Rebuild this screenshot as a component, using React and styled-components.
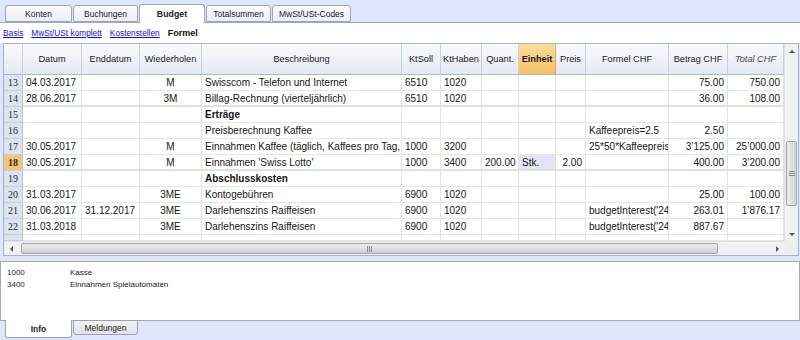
import React from "react";
import styled, { createGlobalStyle } from "styled-components";

const GlobalStyle = createGlobalStyle`
  html, body {
    margin: 0;
    padding: 0;
    background: #dde6fa;
  }
  body {
    font-family: "Liberation Sans", Arial, sans-serif;
    color: #111;
  }
`;

const COLS = [
  { key: "n", title: "", width: 19, align: "center" },
  { key: "datum", title: "Datum", width: 59, align: "left" },
  { key: "end", title: "Enddatum", width: 58, align: "left" },
  { key: "rep", title: "Wiederholen", width: 62, align: "center" },
  { key: "desc", title: "Beschreibung", width: 200, align: "left" },
  { key: "soll", title: "KtSoll", width: 39, align: "left" },
  { key: "haben", title: "KtHaben", width: 41, align: "left" },
  { key: "quant", title: "Quant.", width: 37, align: "right" },
  { key: "unit", title: "Einheit", width: 37, align: "left" },
  { key: "preis", title: "Preis", width: 30, align: "right" },
  { key: "formel", title: "Formel CHF", width: 83, align: "left" },
  { key: "betrag", title: "Betrag CHF", width: 59, align: "right" },
  { key: "total", title: "Total CHF", width: 56, align: "right" },
];

const TEMPLATE = COLS.map((c) => c.width + "px").join(" ");

const ROWS = [
  { n: 13, datum: "04.03.2017", rep: "M", desc: "Swisscom - Telefon und Internet", soll: "6510", haben: "1020", betrag: "75.00", total: "750.00" },
  { n: 14, datum: "28.06.2017", rep: "3M", desc: "Billag-Rechnung (vierteljährlich)", soll: "6510", haben: "1020", betrag: "36.00", total: "108.00", thick: true },
  { n: 15, desc: "Erträge", group: true },
  { n: 16, desc: "Preisberechnung Kaffee", formel: "Kaffeepreis=2.5", betrag: "2.50" },
  { n: 17, datum: "30.05.2017", rep: "M", desc: "Einnahmen Kaffee (täglich, Kaffees pro Tag,", soll: "1000", haben: "3200", formel: "25*50*Kaffeepreis", betrag: "3’125.00", total: "25’000.00" },
  { n: 18, datum: "30.05.2017", rep: "M", desc: "Einnahmen 'Swiss Lotto'", soll: "1000", haben: "3400", quant: "200.00", unit: "Stk.", preis: "2.00", betrag: "400.00", total: "3’200.00", current: true, thick: true },
  { n: 19, desc: "Abschlusskosten", group: true },
  { n: 20, datum: "31.03.2017", rep: "3ME", desc: "Kontogebühren", soll: "6900", haben: "1020", betrag: "25.00", total: "100.00" },
  { n: 21, datum: "30.06.2017", end: "31.12.2017", rep: "3ME", desc: "Darlehenszins Raiffeisen", soll: "6900", haben: "1020", formel: "budgetInterest('24", betrag: "263.01", total: "1’876.17" },
  { n: 22, datum: "31.03.2018", rep: "3ME", desc: "Darlehenszins Raiffeisen", soll: "6900", haben: "1020", formel: "budgetInterest('24", betrag: "887.67" },
];

const Page = styled.div`
  width: 800px;
  height: 340px;
  overflow: hidden;
  background: #dde6fa;
  display: flex;
  flex-direction: column;
`;

const TabBar = styled.div`
  height: 22px;
  display: flex;
  align-items: flex-end;
  padding-left: 5px;
`;

const Tab = styled.div`
  box-sizing: border-box;
  width: ${({ $w }) => $w}px;
  height: ${({ $active }) => ($active ? 19 : 17)}px;
  margin-bottom: ${({ $active }) => ($active ? -1 : 0)}px;
  margin-right: 1px;
  border: 1px solid #9ea7b8;
  border-bottom: ${({ $active }) => ($active ? "none" : "1px solid #9ea7b8")};
  border-radius: 3px 3px 0 0;
  background: ${({ $active }) =>
    $active ? "#ffffff" : "linear-gradient(#fbfcfe, #e9edf4)"};
  font-size: ${({ $active }) => ($active ? "8.8px" : "8.5px")};
  font-weight: ${({ $active }) => ($active ? 700 : 400)};
  color: #1c1c1c;
  display: flex;
  align-items: center;
  justify-content: center;
  position: relative;
  z-index: ${({ $active }) => ($active ? 2 : 1)};
`;

const SubBar = styled.div`
  box-sizing: border-box;
  height: 21px;
  background: #ffffff;
  border-top: 1px solid #9ea7b8;
  display: flex;
  align-items: center;
  gap: 8px;
  padding: 0 0 0 3px;
  font-size: 8.3px;
`;

const SubLink = styled.span`
  color: #1010e0;
  text-decoration: underline;
`;

const SubCurrent = styled.span`
  font-weight: 700;
  font-size: 9px;
  color: #111;
`;

const GridWrap = styled.div`
  box-sizing: border-box;
  margin-left: 3px;
  width: 796px;
  height: 213px;
  border: 1px solid #a8b3c6;
  background: #ffffff;
  display: grid;
  grid-template-columns: 780px 14px;
  grid-template-rows: 197px 14px;
`;

const Table = styled.div`
  display: grid;
  grid-template-columns: ${TEMPLATE};
  grid-auto-rows: min-content;
  overflow: hidden;
  font-size: 10px;
`;

const HeadCell = styled.div`
  box-sizing: border-box;
  height: 31px;
  border-right: 1px solid ${({ $hot }) => ($hot ? "#e2a84c" : "#c8d1df")};
  border-bottom: 1px solid #a6bad4;
  background: ${({ $hot }) =>
    $hot ? "linear-gradient(#fcdca0, #f6c062)" : "linear-gradient(#f8f9fc, #e4e9f2)"};
  display: flex;
  align-items: center;
  justify-content: center;
  font-size: 9.2px;
  font-weight: ${({ $hot }) => ($hot ? 700 : 400)};
  font-style: ${({ $italic }) => ($italic ? "italic" : "normal")};
  color: ${({ $italic }) => ($italic ? "#4a4a4a" : "#1c1c1c")};
  white-space: nowrap;
`;

const Cell = styled.div`
  box-sizing: border-box;
  height: ${({ $h }) => $h || 16}px;
  line-height: 15px;
  padding: 0 3px;
  border-right: 1px solid #e2e2e2;
  border-bottom: ${({ $thick }) => ($thick ? "2px solid #e0e0e0" : "1px solid #e6e6e6")};
  text-align: ${({ $align }) => $align};
  font-weight: ${({ $bold }) => ($bold ? 700 : 400)};
  background: ${({ $shade }) => ($shade ? "#e4e5f4" : "transparent")};
  color: #161616;
  white-space: nowrap;
  overflow: hidden;
`;

const NumCell = styled.div`
  box-sizing: border-box;
  height: ${({ $h }) => $h || 16}px;
  line-height: 15px;
  border-right: 1px solid #b3c1d7;
  border-bottom: 1px solid #c6d0e1;
  background: ${({ $current }) => ($current ? "#f7c674" : "#dce4f2")};
  font-family: "Liberation Serif", "DejaVu Serif", serif;
  font-size: 10px;
  font-weight: ${({ $current }) => ($current ? 700 : 400)};
  text-align: center;
  color: #2a2a2a;
`;

const VScroll = styled.div`
  background: #f1f1f1;
  border-left: 1px solid #e0e0e0;
  display: flex;
  flex-direction: column;
  align-items: center;
`;

const HScroll = styled.div`
  background: #f1f1f1;
  border-top: 1px solid #e0e0e0;
  display: flex;
  align-items: center;
`;

const Arrow = styled.div`
  width: 14px;
  height: 14px;
  display: flex;
  align-items: center;
  justify-content: center;
  flex: none;
`;

const Gap = styled.div`
  flex: none;
  width: ${({ $w }) => ($w ? $w + "px" : "auto")};
  height: ${({ $h }) => ($h ? $h + "px" : "auto")};
`;

const Thumb = styled.div`
  box-sizing: border-box;
  flex: none;
  width: ${({ $vertical, $len }) => ($vertical ? "11px" : $len + "px")};
  height: ${({ $vertical, $len }) => ($vertical ? $len + "px" : "11px")};
  border: 1px solid #a5a5a5;
  border-radius: 2px;
  background: ${({ $vertical }) =>
    $vertical ? "linear-gradient(90deg, #ececec, #d4d4d4)" : "linear-gradient(#ececec, #cfcfcf)"};
  display: flex;
  align-items: center;
  justify-content: center;
`;

const Corner = styled.div`
  background: #eeeeee;
`;

const InfoPanel = styled.div`
  box-sizing: border-box;
  margin-top: 5px;
  width: 800px;
  height: 60px;
  background: #ffffff;
  border: 1px solid #a8a8b4;
  padding: 5px 6px;
  font-size: 8px;
  color: #222;
`;

const InfoLine = styled.div`
  display: grid;
  grid-template-columns: 63px 1fr;
  line-height: 12px;
`;

const BottomTabs = styled.div`
  display: flex;
  padding-left: 5px;
  margin-top: -1px;
`;

const BottomTab = styled.div`
  box-sizing: border-box;
  width: ${({ $w }) => $w}px;
  height: ${({ $active }) => ($active ? 18 : 15)}px;
  margin-right: 1px;
  border: 1px solid #9ea2ad;
  border-top: ${({ $active }) => ($active ? "none" : "1px solid #9ea2ad")};
  border-radius: 0 0 3px 3px;
  background: ${({ $active }) => ($active ? "#ffffff" : "linear-gradient(#f2f3f6, #dfe2e8)")};
  font-size: 8.5px;
  font-weight: ${({ $active }) => ($active ? 700 : 400)};
  display: flex;
  align-items: center;
  justify-content: center;
  color: #1c1c1c;
`;

const Tri = ({ dir }) => {
  const paths = {
    up: "M0 4 L3 1 L6 4 Z",
    down: "M0 1 L3 4 L6 1 Z",
    left: "M4 0 L1 3 L4 6 Z",
    right: "M1 0 L4 3 L1 6 Z",
  };
  const vertical = dir === "up" || dir === "down";
  return (
    <svg width={vertical ? 6 : 5} height={vertical ? 5 : 6} viewBox={vertical ? "0 0 6 5" : "0 0 5 6"}>
      <path d={paths[dir]} fill="#555" />
    </svg>
  );
};

const Grip = ({ vertical }) => (
  <svg width="6" height="6" viewBox="0 0 6 6">
    {[0, 2, 4].map((o) =>
      vertical ? (
        <line key={o} x1="0" x2="6" y1={o + 0.5} y2={o + 0.5} stroke="#8a8a8a" strokeWidth="1" />
      ) : (
        <line key={o} y1="0" y2="6" x1={o + 0.5} x2={o + 0.5} stroke="#8a8a8a" strokeWidth="1" />
      )
    )}
  </svg>
);

const TOP_TABS = [
  { label: "Konten", w: 67 },
  { label: "Buchungen", w: 65 },
  { label: "Budget", w: 66, active: true },
  { label: "Totalsummen", w: 65 },
  { label: "MwSt/USt-Codes", w: 79 },
];

const App = () => (
  <>
    <GlobalStyle />
    <Page>
      <TabBar>
        {TOP_TABS.map((t) => (
          <Tab key={t.label} $w={t.w} $active={t.active}>
            {t.label}
          </Tab>
        ))}
      </TabBar>
      <SubBar>
        <SubLink>Basis</SubLink>
        <SubLink>MwSt/USt komplett</SubLink>
        <SubLink>Kostenstellen</SubLink>
        <SubCurrent>Formel</SubCurrent>
      </SubBar>
      <GridWrap>
        <Table>
          {COLS.map((c) => (
            <HeadCell key={c.key} $hot={c.key === "unit"} $italic={c.key === "total"}>
              {c.title}
            </HeadCell>
          ))}
          {ROWS.map((r) =>
            COLS.map((c) =>
              c.key === "n" ? (
                <NumCell key={r.n + c.key} $current={r.current}>
                  {r.n}
                </NumCell>
              ) : (
                <Cell
                  key={r.n + c.key}
                  $align={c.align}
                  $bold={r.group}
                  $thick={r.thick}
                  $shade={r.current && c.key === "unit"}
                >
                  {r[c.key] || ""}
                </Cell>
              )
            )
          )}
          {COLS.map((c) =>
            c.key === "n" ? (
              <NumCell key={"p" + c.key} $h={6} />
            ) : (
              <Cell key={"p" + c.key} $h={6} $align="left" />
            )
          )}
        </Table>
        <VScroll>
          <Arrow>
            <Tri dir="up" />
          </Arrow>
          <Gap $h={83} />
          <Thumb $vertical $len={65}>
            <Grip vertical />
          </Thumb>
          <Gap $h={21} />
          <Arrow>
            <Tri dir="down" />
          </Arrow>
        </VScroll>
        <HScroll>
          <Arrow>
            <Tri dir="left" />
          </Arrow>
          <Gap $w={3} />
          <Thumb $len={697}>
            <Grip />
          </Thumb>
          <Gap $w={52} />
          <Arrow>
            <Tri dir="right" />
          </Arrow>
        </HScroll>
        <Corner />
      </GridWrap>
      <InfoPanel>
        <InfoLine>
          <span>1000</span>
          <span>Kasse</span>
        </InfoLine>
        <InfoLine>
          <span>3400</span>
          <span>Einnahmen Spielautomaten</span>
        </InfoLine>
      </InfoPanel>
      <BottomTabs>
        <BottomTab $w={67} $active>
          Info
        </BottomTab>
        <BottomTab $w={65}>Meldungen</BottomTab>
      </BottomTabs>
    </Page>
  </>
);

export default App;
